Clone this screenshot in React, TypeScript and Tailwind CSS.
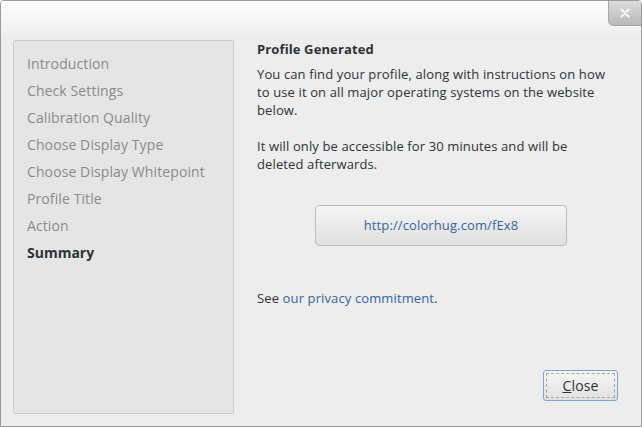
import React from "react";

const items = [
  "Introduction",
  "Check Settings",
  "Calibration Quality",
  "Choose Display Type",
  "Choose Display Whitepoint",
  "Profile Title",
  "Action",
];

export default function App() {
  return (
    <div
      className="relative w-[642px] h-[427px] overflow-hidden bg-[#ededed] border border-[#9a9a9a] rounded-t-[4px] flex flex-col text-[13px] text-[#2e3436]"
      style={{ fontFamily: '"Open Sans", "DejaVu Sans", sans-serif' }}
    >
      <div className="absolute inset-x-0 top-0 h-[40px] bg-gradient-to-b from-[#fdfdfd] to-[#ededed]" />
      <div className="absolute right-[-1px] top-[-1px] w-[34px] h-[26px] rounded-bl-[5px] border border-[#a8a8a8] bg-gradient-to-b from-[#dcdcdc] to-[#b9b9b9] flex items-center justify-center">
        <svg width="10" height="10" viewBox="0 0 10 10">
          <path d="M1.5 1.5 L8.5 8.5 M8.5 1.5 L1.5 8.5" stroke="#f4f4f4" strokeWidth="2.4" strokeLinecap="round" />
        </svg>
      </div>
      <div className="relative flex flex-1 pt-[39px] pl-[12px] pb-[12px]">
        <div className="w-[221px] h-[374px] shrink-0 bg-[#e5e5e5] border border-[#cdcdc4] rounded-[2px] pt-[13px] pl-[13px] flex flex-col">
          {items.map((t) => (
            <div key={t} className="h-[27px] leading-[20px] text-[14px] tracking-[0.1px] text-[#8b8b8b]">
              {t}
            </div>
          ))}
          <div className="h-[27px] leading-[20px] text-[14px] font-bold text-[#2e3436]">Summary</div>
        </div>
        <div className="flex-1 pl-[23px] pr-[20px] flex flex-col relative tracking-[0.12px]">
          <div className="mt-[0px] font-bold text-[13px] leading-[18px]">Profile Generated</div>
          <div className="mt-[7px] leading-[18px] w-[360px]">
            You can find your profile, along with instructions on how to use it on all major operating systems on the website below.
          </div>
          <div className="mt-[18px] leading-[18px] w-[360px]">
            It will only be accessible for 30 minutes and will be deleted afterwards.
          </div>
          <div className="mt-[32px] ml-[58px] w-[252px] h-[41px] rounded-[4px] border border-[#bdbdbd] bg-gradient-to-b from-[#f5f5f5] to-[#e0e0e0] flex items-center justify-center text-[#3465a4]">
            http://colorhug.com/fEx8
          </div>
          <div className="mt-[43px] leading-[18px]">
            See <span className="text-[#3465a4]">our privacy commitment</span>.
          </div>
          <div className="flex-1" />
          <div className="flex justify-end pr-[3px] pb-[13px]">
            <div className="w-[75px] h-[31px] rounded-[3px] border border-[#7ea4d9] bg-gradient-to-b from-[#f5f5f5] to-[#e2e2e2] p-[2px]">
              <div className="w-full h-full border border-dashed border-[#a8a8a8] flex items-center justify-center text-[14px]">
                <span><span className="underline">C</span>lose</span>
              </div>
            </div>
          </div>
        </div>
      </div>
    </div>
  );
}
